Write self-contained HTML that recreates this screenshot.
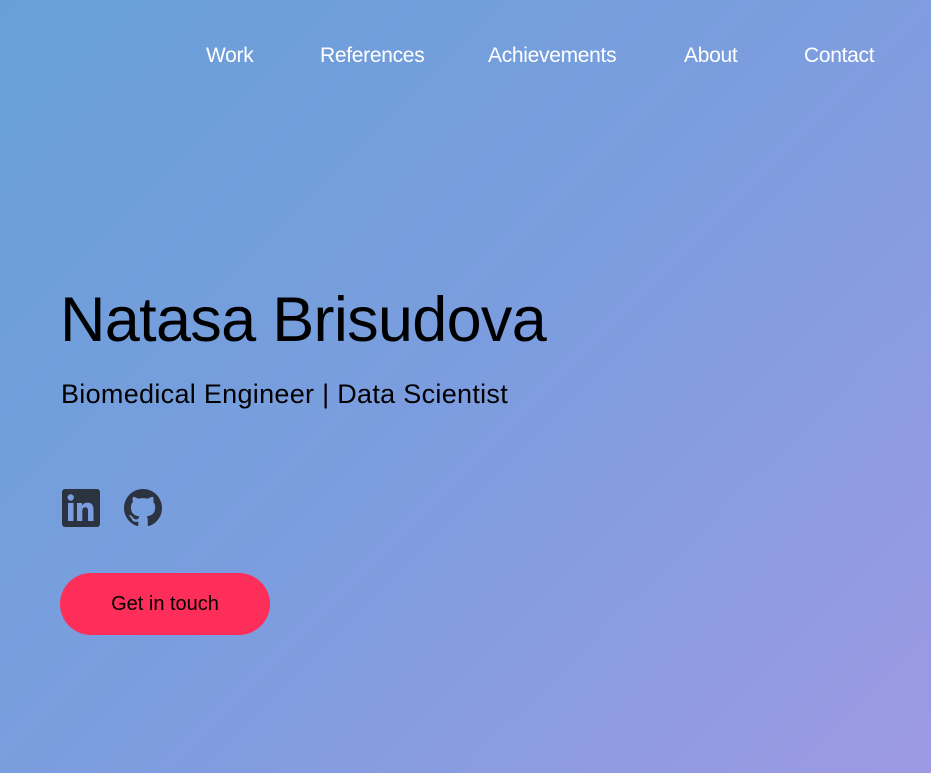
<!DOCTYPE html>
<html><head><style>
html,body{margin:0;padding:0}
body{width:931px;height:773px;overflow:hidden;background:linear-gradient(135deg,#67a0d8 0%,#7c9ddf 50%,#9d9ae3 100%);font-family:"Liberation Sans",sans-serif;position:relative}
nav a{position:absolute;top:44px;color:#fff;font-size:21px;text-decoration:none;letter-spacing:-0.3px}
h1{position:absolute;left:60px;top:284px;margin:0;font-weight:400;font-size:63px;color:#000;letter-spacing:-0.7px}
.sub{position:absolute;left:61px;top:379px;font-size:27px;color:#000;letter-spacing:0.3px}
.btn{position:absolute;left:60px;top:573px;width:210px;height:62px;border-radius:31px;background:#fe2e5a;color:#000;font-size:20px;text-align:center;line-height:62px}
svg{position:absolute}
</style></head><body>
<nav><a style="left:206px">Work</a><a style="left:320px">References</a><a style="left:488px">Achievements</a><a style="left:684px">About</a><a style="left:804px">Contact</a></nav>
<h1>Natasa Brisudova</h1>
<div class="sub">Biomedical Engineer | Data Scientist</div>
<svg style="left:62px;top:489px" width="38" height="38" viewBox="0 0 38 38"><rect width="38" height="38" rx="3" fill="#2c3340"/><rect x="6" y="14" width="5.5" height="18" fill="#7b9ddf"/><circle cx="8.7" cy="8.5" r="3.2" fill="#7b9ddf"/><path d="M15 14h5v2.6c1-1.8 3-3 5.5-3 4.5 0 6 2.8 6 7.2V32h-5.5V22c0-2.3-.6-3.8-2.7-3.8-2.2 0-3 1.6-3 3.8v10H15z" fill="#7b9ddf"/></svg>
<svg style="left:124px;top:489px" width="38" height="38" viewBox="0 0 16 16"><path fill="#2c3340" d="M8 0C3.580 0 0 3.58 0 8c0 3.54 2.29 6.53 5.47 7.59.4.07.55-.17.55-.38 0-.19-.01-.82-.01-1.490-2.010.37-2.530-.49-2.690-.94-.09-.23-.48-.94-.82-1.130-.28-.15-.68-.52-.01-.53.63-.01 1.08.58 1.23.82.72 1.21 1.87.87 2.33.66.07-.52.28-.87.51-1.070-1.78-.2-3.640-.89-3.640-3.950 0-.87.31-1.59.82-2.150-.08-.2-.36-1.020.08-2.120 0 0 .67-.21 2.2.82.64-.18 1.32-.27 2-.27.68 0 1.36.09 2 .27 1.53-1.04 2.2-.82 2.2-.82.44 1.1.16 1.92.08 2.12.51.56.82 1.27.82 2.15 0 3.07-1.87 3.75-3.65 3.95.29.25.54.73.54 1.48 0 1.07-.01 1.93-.01 2.2 0 .21.15.46.55.38A8.013 8.013 0 0016 8c0-4.42-3.58-8-8-8z"/></svg>
<div class="btn">Get in touch</div>
</body></html>
